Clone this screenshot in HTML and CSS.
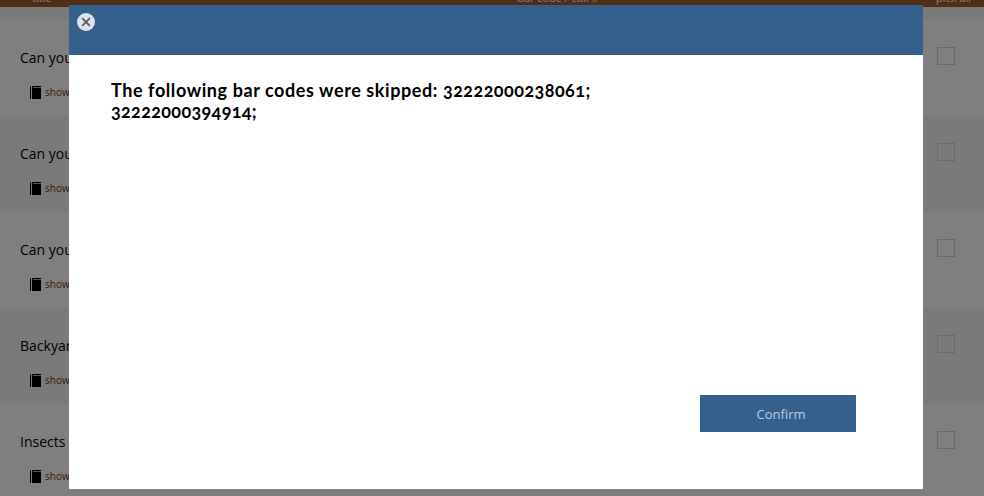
FILE: index.html
```html
<!DOCTYPE html>
<html lang="en">
<head>
<meta charset="utf-8">
<title>Skipped bar codes</title>
<link rel="stylesheet" href="styles.css">
</head>
<body>
<svg class="defs"><symbol id="book" viewBox="0 0 11 13"><path d="M2 0h9v1H3v1h8v11H2z"/><path d="M0 .5h1V13H0z"/><path class="page" d="M3 1h8v1H3z"/></symbol></svg>
<main class="list">
<header class="head"><span>title</span><span>bar code / call #</span><span>pick all</span></header>
<div class="gap"></div>
<section class="row"><div><h2>Can you see me?</h2><p><svg><use href="#book"/></svg>show</p></div><i class="box"></i></section>
<section class="row"><div><h2>Can you see me?</h2><p><svg><use href="#book"/></svg>show</p></div><i class="box"></i></section>
<section class="row"><div><h2>Can you see me?</h2><p><svg><use href="#book"/></svg>show</p></div><i class="box"></i></section>
<section class="row"><div><h2>Backyard</h2><p><svg><use href="#book"/></svg>show</p></div><i class="box"></i></section>
<section class="row"><div><h2>Insects</h2><p><svg><use href="#book"/></svg>show</p></div><i class="box"></i></section>
</main>
<div class="overlay">
<div class="dialog" role="dialog">
<div class="bar"><button class="close" aria-label="Close"><svg viewBox="0 0 18 18"><circle cx="9" cy="9" r="9"/><path d="M5.2 5.2l7.6 7.6m0-7.6l-7.6 7.6"/></svg></button></div>
<div class="message"><span class="words">The following bar codes were skipped: </span><span class="code">32222000238061;</span><br><span class="code second">32222000394914;</span></div>
<button class="confirm">Confirm</button>
</div>
</div>
</body>
</html>
```

FILE: styles.css
```css
body { margin: 0; height: 496px; overflow: hidden; font-family: "Open Sans", sans-serif; color: #000; background: #fff; }
.defs { position: absolute; width: 0; height: 0; }
.head { display: grid; grid-template-columns: 485px 419px 1fr; height: 7px; margin: 0; padding-left: 32px; background: #9f5b2c; color: #fff; font: 11px/18px "Open Sans", sans-serif; overflow: hidden; }
.head span { margin-top: -11px; }
.gap { height: 13px; background: #f5f5f5; }
.row { box-sizing: border-box; display: flex; justify-content: space-between; height: 96px; padding: 27px 29px 0 20px; background: #fff; }
.row:nth-of-type(even) { background: #f5f5f5; }
.row h2 { margin: 0; font-size: 14px; font-weight: 400; line-height: 22px; }
.row p { display: flex; align-items: center; gap: 4px; margin: 13px 0 0 10px; font-size: 10px; line-height: 20px; color: #802412; }
.row svg { width: 11px; height: 13px; }
.page { fill: #aaa; }
.box { box-sizing: border-box; width: 18px; height: 18px; border: 1px solid #d4d4d4; }
.overlay { position: fixed; inset: 0; background: rgba(0, 0, 0, .5); }
.dialog { box-sizing: border-box; display: flex; flex-direction: column; width: 854px; height: 484px; margin: 5px 0 0 69px; background: #fff; }
.bar { box-sizing: border-box; height: 50px; padding: 8px; background: #355f8d; }
.close { display: block; width: 18px; height: 18px; padding: 0; border: 0; background: none; }
.close svg { display: block; width: 18px; height: 18px; }
.close circle { fill: #dce3eb; }
.close path { fill: none; stroke: #55585c; stroke-width: 1.7; }
.message { margin: 25px 0 0 42px; font: 700 18px/21px Lato, sans-serif; font-variant-numeric: oldstyle-nums; white-space: nowrap; }
.words { letter-spacing: .58px; }
.code { letter-spacing: .46px; }
.second { letter-spacing: .34px; }
.confirm { width: 156px; height: 37px; margin: auto 67px 57px auto; padding: 0 0 0 6px; border: 0; background: #355f8d; color: #bccde0; font: 13px "Open Sans", sans-serif; }
```
